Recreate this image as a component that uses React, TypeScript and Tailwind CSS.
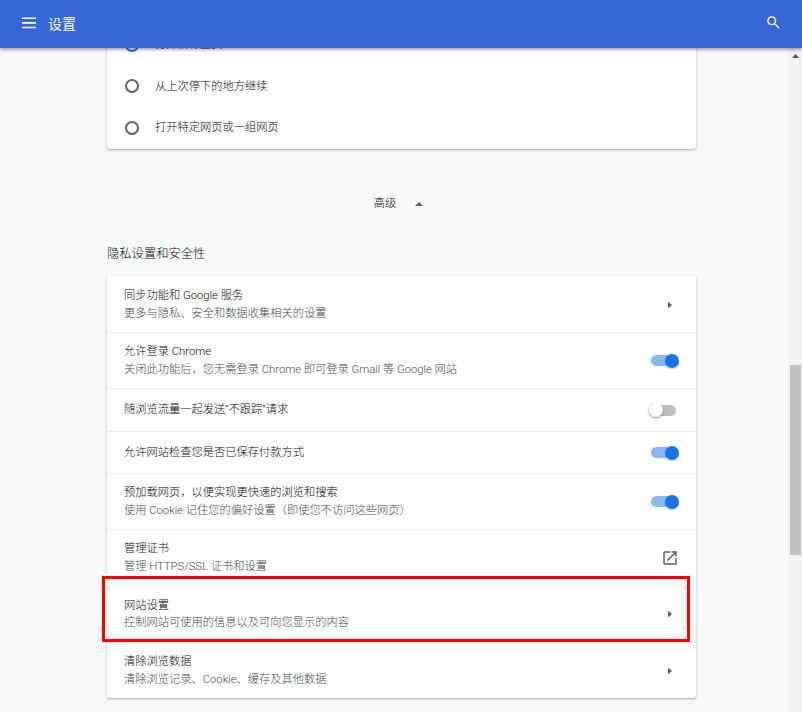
import React from 'react';

type Action = 'arrow' | 'on' | 'off' | 'external';

interface Setting {
  title: string;
  detail?: string;
  action: Action;
  height: string;
}

const settings: Setting[] = [
  { title: '同步功能和 Google 服务', detail: '更多与隐私、安全和数据收集相关的设置', action: 'arrow', height: 'h-[56px]' },
  { title: '允许登录 Chrome', detail: '关闭此功能后，您无需登录 Chrome 即可登录 Gmail 等 Google 网站', action: 'on', height: 'h-[56px]' },
  { title: '随浏览流量一起发送“不跟踪”请求', action: 'off', height: 'h-[43px]' },
  { title: '允许网站检查您是否已保存付款方式', action: 'on', height: 'h-[42px]' },
  { title: '预加载网页，以便实现更快速的浏览和搜索', detail: '使用 Cookie 记住您的偏好设置（即使您不访问这些网页）', action: 'on', height: 'h-[56px]' },
  { title: '管理证书', detail: '管理 HTTPS/SSL 证书和设置', action: 'external', height: 'h-[56px]' },
  { title: '网站设置', detail: '控制网站可使用的信息以及可向您显示的内容', action: 'arrow', height: 'h-[57px]' },
  { title: '清除浏览数据', detail: '清除浏览记录、Cookie、缓存及其他数据', action: 'arrow', height: 'h-[56px]' },
];

const startupOptions = [
  { label: '打开新标签页', checked: true },
  { label: '从上次停下的地方继续', checked: false },
  { label: '打开特定网页或一组网页', checked: false },
];

function Toggle({ on }: { on: boolean }) {
  return (
    <span className={`relative mr-[2.5px] block h-[11px] w-[25px] rounded-full ${on ? 'bg-[#8cb8f5]' : 'bg-[#bdc1c6]'}`}>
      <span
        className={`absolute -top-[1.5px] size-[14px] rounded-full ${
          on
            ? 'left-[13.5px] bg-[#1a73e8] shadow-[0_1px_2px_rgba(26,115,232,0.35)]'
            : '-left-[2px] bg-white shadow-[0_1px_2.5px_rgba(0,0,0,0.45)]'
        }`}
      />
    </span>
  );
}

function RowAction({ action }: { action: Action }) {
  if (action === 'arrow') {
    return (
      <svg className="mr-[7px] h-[8px] w-[4px]" viewBox="0 0 4 8">
        <path d="M0 .5 4 4 0 7.5z" fill="#5f6368" />
      </svg>
    );
  }
  if (action === 'external') {
    return (
      <svg className="size-[18px]" viewBox="0 0 24 24" fill="#5f6368">
        <path d="M19 19H5V5h7V3H5a2 2 0 0 0-2 2v14a2 2 0 0 0 2 2h14c1.1 0 2-.9 2-2v-7h-2v7zM14 3v2h3.59l-9.83 9.83 1.41 1.41L19 6.41V10h2V3h-7z" />
      </svg>
    );
  }
  return <Toggle on={action === 'on'} />;
}

function SettingRow({ setting, first }: { setting: Setting; first: boolean }) {
  return (
    <div
      className={`flex items-center justify-between border-t pr-[17px] pl-[17px] ${setting.height} ${
        first ? 'border-transparent' : 'border-[#eeeeef]'
      }`}
    >
      <div className="text-[11.26px] leading-[17.3px] whitespace-nowrap">
        <div className="text-[#08090b]">{setting.title}</div>
        {setting.detail && <div className="text-[#45494e]">{setting.detail}</div>}
      </div>
      <RowAction action={setting.action} />
    </div>
  );
}

const cardShadow = 'shadow-[0_1px_2px_rgba(60,64,67,0.3),0_1px_3px_rgba(60,64,67,0.15)]';

export default function App() {
  return (
    <div className="relative flex h-[712px] w-[802px] flex-col overflow-hidden bg-[#f8f9fa] font-[Roboto,'Noto_Sans_CJK_SC',sans-serif] font-light">
      <header className="z-10 flex h-[47.5px] shrink-0 items-center bg-[#3367d6] pr-[22px] pl-[22px] shadow-[0_1px_4px_rgba(0,0,0,0.5)]">
        <svg className="-mt-px h-[12px] w-[14px]" viewBox="0 0 14 12" fill="#fff">
          <path d="M0 .5h14v1.6H0zM0 5.1h14v1.6H0zM0 9.7h14v1.6H0z" />
        </svg>
        <h1 className="mt-px ml-[12px] text-[14px] leading-5 font-normal text-white">设置</h1>
        <svg className="-mt-[2px] ml-auto size-[17px] translate-x-[2px]" viewBox="0 0 24 24" fill="#fff">
          <path d="M15.5 14h-.79l-.28-.27A6.471 6.471 0 0 0 16 9.5 6.5 6.5 0 1 0 9.5 16c1.61 0 3.09-.59 4.23-1.57l.27.28v.79l5 4.99L20.49 19l-4.99-5zm-6 0C7.01 14 5 11.99 5 9.5S7.01 5 9.5 5 14 7.01 14 9.5 11.99 14 9.5 14z" />
        </svg>
      </header>

      <div className="flex min-h-0 flex-1">
        <main className="min-w-0 flex-1 overflow-hidden pl-[107px]">
          <section className={`-mt-[23.5px] flex h-[125px] w-[588.5px] flex-col rounded-[3px] bg-white pl-[17.5px] ${cardShadow}`}>
            {startupOptions.map((option) => (
              <div key={option.label} className="flex h-[41.5px] shrink-0 items-center">
                <span
                  className={`flex size-[14px] items-center justify-center rounded-full border-2 ${
                    option.checked ? 'border-[#1a73e8]' : 'border-[#5f6368]'
                  }`}
                >
                  {option.checked && <span className="size-[7px] rounded-full bg-[#1a73e8]" />}
                </span>
                <span className="ml-[16.5px] text-[11.26px] leading-[17px] text-[#08090b]">{option.label}</span>
              </div>
            ))}
          </section>

          <div className="mt-[46px] flex h-[18px] w-[583px] items-center justify-center text-[11.26px] text-[#08090b]">
            <span>高级</span>
            <svg className="ml-[19px] h-[4px] w-[8px]" viewBox="0 0 8 4">
              <path d="M0 4 4 0l4 4z" fill="#5f6368" />
            </svg>
          </div>

          <h2 className="mt-[32px] h-[19px] text-[12.3px] leading-[19px] font-light text-[#08090b]">隐私设置和安全性</h2>

          <section className={`mt-[12px] w-[588.5px] rounded-[3px] bg-white ${cardShadow}`}>
            {settings.map((setting, index) => (
              <SettingRow key={setting.title} setting={setting} first={index === 0} />
            ))}
          </section>
        </main>

        <aside className="flex w-[14px] shrink-0 flex-col items-center bg-[#f1f1f1] pt-[6.5px]">
          <svg className="h-[4px] w-[7px]" viewBox="0 0 7 4">
            <path d="M0 4 3.5 0 7 4z" fill="#505050" />
          </svg>
          <div className="mt-[307px] h-[190px] w-[11px] bg-[#c1c1c1]" />
        </aside>
      </div>

      <div className="absolute top-[576px] left-[102px] z-20 h-[66px] w-[588px] border-[3px] border-[#fe0000]" />
    </div>
  );
}
